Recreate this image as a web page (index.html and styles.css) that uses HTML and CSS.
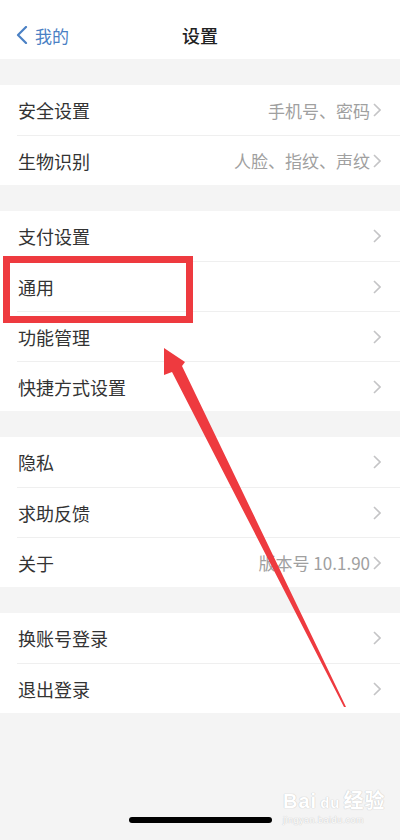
FILE: index.html
```html
<!DOCTYPE html>
<html lang="zh-CN">
<head>
    <meta charset="UTF-8">
    <meta name="viewport" content="width=device-width, initial-scale=1.0">
    <title>设置</title>
    <link rel="stylesheet" href="styles.css">
</head>
<body>
<div class="page">
    <div class="nav">
        <div class="nav-back">
            <svg class="back-icon" width="12" height="18" viewBox="0 0 12 18">
                <polyline points="10,1 2,9 10,17" fill="none" stroke="#4a80c4" stroke-width="2.2" stroke-linecap="round" stroke-linejoin="round"/>
            </svg>
            <span>我的</span>
        </div>
        <div class="nav-title">设置</div>
    </div>

    <div class="group">
        <div class="row">
            <span class="row-label">安全设置</span>
            <span class="row-value">手机号、密码</span>
            <svg class="chevron" width="8" height="14" viewBox="0 0 8 14"><polyline points="1,1 7,7 1,13"/></svg>
        </div>
        <div class="row">
            <span class="row-label">生物识别</span>
            <span class="row-value">人脸、指纹、声纹</span>
            <svg class="chevron" width="8" height="14" viewBox="0 0 8 14"><polyline points="1,1 7,7 1,13"/></svg>
        </div>
    </div>

    <div class="group">
        <div class="row">
            <span class="row-label">支付设置</span>
            <svg class="chevron" width="8" height="14" viewBox="0 0 8 14"><polyline points="1,1 7,7 1,13"/></svg>
        </div>
        <div class="row">
            <span class="row-label">通用</span>
            <svg class="chevron" width="8" height="14" viewBox="0 0 8 14"><polyline points="1,1 7,7 1,13"/></svg>
        </div>
        <div class="row">
            <span class="row-label">功能管理</span>
            <svg class="chevron" width="8" height="14" viewBox="0 0 8 14"><polyline points="1,1 7,7 1,13"/></svg>
        </div>
        <div class="row">
            <span class="row-label">快捷方式设置</span>
            <svg class="chevron" width="8" height="14" viewBox="0 0 8 14"><polyline points="1,1 7,7 1,13"/></svg>
        </div>
    </div>

    <div class="group">
        <div class="row">
            <span class="row-label">隐私</span>
            <svg class="chevron" width="8" height="14" viewBox="0 0 8 14"><polyline points="1,1 7,7 1,13"/></svg>
        </div>
        <div class="row">
            <span class="row-label">求助反馈</span>
            <svg class="chevron" width="8" height="14" viewBox="0 0 8 14"><polyline points="1,1 7,7 1,13"/></svg>
        </div>
        <div class="row">
            <span class="row-label">关于</span>
            <span class="row-value">版本号 10.1.90</span>
            <svg class="chevron" width="8" height="14" viewBox="0 0 8 14"><polyline points="1,1 7,7 1,13"/></svg>
        </div>
    </div>

    <div class="group">
        <div class="row">
            <span class="row-label">换账号登录</span>
            <svg class="chevron" width="8" height="14" viewBox="0 0 8 14"><polyline points="1,1 7,7 1,13"/></svg>
        </div>
        <div class="row">
            <span class="row-label">退出登录</span>
            <svg class="chevron" width="8" height="14" viewBox="0 0 8 14"><polyline points="1,1 7,7 1,13"/></svg>
        </div>
    </div>

    <div class="home-area">
        <div class="home-indicator"></div>
    </div>

    <!-- 标注：红框 + 箭头 -->
    <div class="mark-box"></div>
    <svg class="mark-arrow" width="400" height="840" viewBox="0 0 400 840">
        <polygon points="164,348 185,362 182,366 346,707 344,707 172,372 164,375" fill="#ee3a3f"/>
    </svg>

    <!-- 水印 -->
    <div class="watermark">
        <div class="wm-main">Bai<span class="wm-du">du</span>经验</div>
        <div class="wm-sub">jingyan.baidu.com</div>
    </div>
</div>
</body>
</html>
```

FILE: styles.css
```css
* {
    margin: 0;
    padding: 0;
    box-sizing: border-box;
}

body {
    background: #f4f4f4;
    font-family: "Noto Sans CJK SC", "Noto Sans", sans-serif;
}

.page {
    position: relative;
    width: 400px;
    height: 840px;
    overflow: hidden;
    background: #f4f4f4;
}

/* 顶部导航 */
.nav {
    position: relative;
    height: 59px;
    padding-top: 11px;
    background: #fff;
    display: flex;
    align-items: center;
    justify-content: center;
}

.nav-back {
    position: absolute;
    left: 16px;
    top: 11px;
    bottom: 0;
    display: flex;
    align-items: center;
    gap: 7px;
    color: #4a80c4;
    font-size: 17px;
}

.nav-title {
    font-size: 18px;
    color: #222;
    font-weight: 500;
}

/* 分组 */
.group {
    margin-top: 26px;
    background: #fff;
}

.row {
    height: 50px;
    margin-left: 17px;
    padding: 0 19px 0 1px;
    display: flex;
    align-items: center;
}

.row + .row {
    border-top: 1px solid #efefef;
}

.row-label {
    flex: 1;
    font-size: 18px;
    color: #333;
}

.row-value {
    font-size: 17px;
    color: #a0a0a0;
    margin-right: 3px;
}

.chevron {
    fill: none;
    stroke: #c4c4c6;
    stroke-width: 1.6;
}

/* 底部 */
.home-area {
    display: flex;
    justify-content: center;
    padding-top: 104px;
}

.home-indicator {
    width: 143px;
    height: 6px;
    border-radius: 3px;
    background: #000;
}

/* 标注 */
.mark-box {
    position: absolute;
    left: 3px;
    top: 256px;
    width: 190px;
    height: 67px;
    border: 7px solid #ee3a3f;
}

.mark-arrow {
    position: absolute;
    left: 0;
    top: 0;
    pointer-events: none;
}

/* 水印 */
.watermark {
    position: absolute;
    left: 283px;
    top: 790px;
    color: #fff;
    text-shadow: 0 0 1px #c8c8c8, 0 0 1px #c8c8c8;
    font-family: "Liberation Sans", "Noto Sans CJK SC", sans-serif;
}

.wm-main {
    font-size: 20px;
    font-weight: bold;
    line-height: 22px;
    letter-spacing: 1px;
}

.wm-du {
    font-size: 15px;
    margin: 0 3px;
}

.wm-sub {
    font-size: 9px;
    line-height: 12px;
    letter-spacing: 0.5px;
}
```
